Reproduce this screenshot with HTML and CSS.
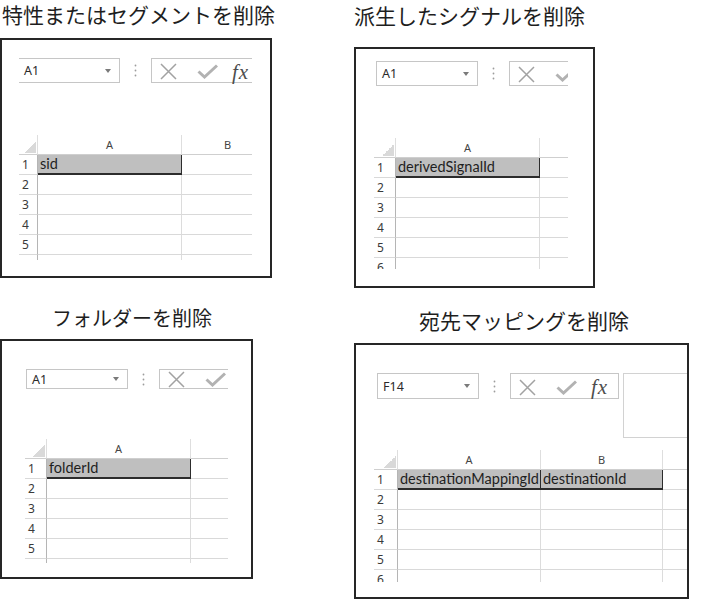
FILE: index.html
```html
<!DOCTYPE html>
<html lang="ja">
<head>
<meta charset="utf-8">
<title>削除テンプレート</title>
<link rel="stylesheet" href="styles.css">
</head>
<body>
<div class="canvas">

  <figure class="fig fig-1">
    <div class="title">特性またはセグメントを削除</div>
    <div class="panel">
      <div class="shot">
        <div class="toolbar">
          <div class="namebox"><span class="nb-text">A1</span><span class="caret"></span></div>
          <div class="dots"><svg width="3" height="13" viewBox="0 0 3 13"><circle cx="1.5" cy="1.5" r="0.9"/><circle cx="1.5" cy="6.5" r="0.9"/><circle cx="1.5" cy="11.5" r="0.9"/></svg></div>
          <div class="fbar">
            <svg class="ic-x" width="17" height="17" viewBox="0 0 17 17"><path d="M1 1 L16 16 M16 1 L1 16"/></svg>
            <svg class="ic-check" width="21" height="15" viewBox="0 0 21 15"><path d="M1.5 7.5 L7.5 13 L20 1.5"/></svg>
            <span class="fx">fx</span>
          </div>
        </div>
        <div class="grid">
          <div class="grow hrow"><div class="corner"><span class="tri"></span></div><div class="ch">A</div><div class="ch">B</div><div class="ch"></div></div>
          <div class="grow"><div class="rh">1</div><div class="c sel">sid</div><div class="c"></div><div class="c"></div></div>
          <div class="grow"><div class="rh">2</div><div class="c"></div><div class="c"></div><div class="c"></div></div>
          <div class="grow"><div class="rh">3</div><div class="c"></div><div class="c"></div><div class="c"></div></div>
          <div class="grow"><div class="rh">4</div><div class="c"></div><div class="c"></div><div class="c"></div></div>
          <div class="grow"><div class="rh">5</div><div class="c"></div><div class="c"></div><div class="c"></div></div>
          <div class="grow"><div class="rh"></div><div class="c"></div><div class="c"></div><div class="c"></div></div>
        </div>
      </div>
    </div>
  </figure>

  <figure class="fig fig-2">
    <div class="title">派生したシグナルを削除</div>
    <div class="panel">
      <div class="shot">
        <div class="toolbar">
          <div class="namebox"><span class="nb-text">A1</span><span class="caret"></span></div>
          <div class="dots"><svg width="3" height="13" viewBox="0 0 3 13"><circle cx="1.5" cy="1.5" r="0.9"/><circle cx="1.5" cy="6.5" r="0.9"/><circle cx="1.5" cy="11.5" r="0.9"/></svg></div>
          <div class="fbar">
            <svg class="ic-x" width="17" height="17" viewBox="0 0 17 17"><path d="M1 1 L16 16 M16 1 L1 16"/></svg>
            <svg class="ic-check" width="21" height="15" viewBox="0 0 21 15"><path d="M1.5 7.5 L7.5 13 L20 1.5"/></svg>
          </div>
        </div>
        <div class="grid">
          <div class="grow hrow"><div class="corner"><span class="tri"></span></div><div class="ch">A</div><div class="ch"></div><div class="ch"></div></div>
          <div class="grow"><div class="rh">1</div><div class="c sel">derivedSignalId</div><div class="c"></div><div class="c"></div></div>
          <div class="grow"><div class="rh">2</div><div class="c"></div><div class="c"></div><div class="c"></div></div>
          <div class="grow"><div class="rh">3</div><div class="c"></div><div class="c"></div><div class="c"></div></div>
          <div class="grow"><div class="rh">4</div><div class="c"></div><div class="c"></div><div class="c"></div></div>
          <div class="grow"><div class="rh">5</div><div class="c"></div><div class="c"></div><div class="c"></div></div>
          <div class="grow"><div class="rh">6</div><div class="c"></div><div class="c"></div><div class="c"></div></div>
        </div>
      </div>
    </div>
  </figure>

  <figure class="fig fig-3">
    <div class="title">フォルダーを削除</div>
    <div class="panel">
      <div class="shot">
        <div class="toolbar">
          <div class="namebox"><span class="nb-text">A1</span><span class="caret"></span></div>
          <div class="dots"><svg width="3" height="13" viewBox="0 0 3 13"><circle cx="1.5" cy="1.5" r="0.9"/><circle cx="1.5" cy="6.5" r="0.9"/><circle cx="1.5" cy="11.5" r="0.9"/></svg></div>
          <div class="fbar">
            <svg class="ic-x" width="17" height="17" viewBox="0 0 17 17"><path d="M1 1 L16 16 M16 1 L1 16"/></svg>
            <svg class="ic-check" width="21" height="15" viewBox="0 0 21 15"><path d="M1.5 7.5 L7.5 13 L20 1.5"/></svg>
          </div>
        </div>
        <div class="grid">
          <div class="grow hrow"><div class="corner"><span class="tri"></span></div><div class="ch">A</div><div class="ch"></div><div class="ch"></div></div>
          <div class="grow"><div class="rh">1</div><div class="c sel">folderId</div><div class="c"></div><div class="c"></div></div>
          <div class="grow"><div class="rh">2</div><div class="c"></div><div class="c"></div><div class="c"></div></div>
          <div class="grow"><div class="rh">3</div><div class="c"></div><div class="c"></div><div class="c"></div></div>
          <div class="grow"><div class="rh">4</div><div class="c"></div><div class="c"></div><div class="c"></div></div>
          <div class="grow"><div class="rh">5</div><div class="c"></div><div class="c"></div><div class="c"></div></div>
          <div class="grow"><div class="rh"></div><div class="c"></div><div class="c"></div><div class="c"></div></div>
        </div>
      </div>
    </div>
  </figure>

  <figure class="fig fig-4">
    <div class="title">宛先マッピングを削除</div>
    <div class="panel">
      <div class="shot">
        <div class="toolbar">
          <div class="namebox"><span class="nb-text">F14</span><span class="caret"></span></div>
          <div class="dots"><svg width="3" height="13" viewBox="0 0 3 13"><circle cx="1.5" cy="1.5" r="0.9"/><circle cx="1.5" cy="6.5" r="0.9"/><circle cx="1.5" cy="11.5" r="0.9"/></svg></div>
          <div class="fbar">
            <svg class="ic-x" width="17" height="17" viewBox="0 0 17 17"><path d="M1 1 L16 16 M16 1 L1 16"/></svg>
            <svg class="ic-check" width="21" height="15" viewBox="0 0 21 15"><path d="M1.5 7.5 L7.5 13 L20 1.5"/></svg>
            <span class="fx">fx</span>
          </div>
          <div class="fexpand"></div>
        </div>
        <div class="grid">
          <div class="grow hrow"><div class="corner"><span class="tri"></span></div><div class="ch">A</div><div class="ch">B</div><div class="ch"></div></div>
          <div class="grow"><div class="rh">1</div><div class="c sel">destinationMappingId</div><div class="c sel">destinationId</div><div class="c"></div></div>
          <div class="grow"><div class="rh">2</div><div class="c"></div><div class="c"></div><div class="c"></div></div>
          <div class="grow"><div class="rh">3</div><div class="c"></div><div class="c"></div><div class="c"></div></div>
          <div class="grow"><div class="rh">4</div><div class="c"></div><div class="c"></div><div class="c"></div></div>
          <div class="grow"><div class="rh">5</div><div class="c"></div><div class="c"></div><div class="c"></div></div>
          <div class="grow"><div class="rh">6</div><div class="c"></div><div class="c"></div><div class="c"></div></div>
        </div>
      </div>
    </div>
  </figure>

</div>
</body>
</html>
```

FILE: styles.css
```css
* { box-sizing: border-box; }

html, body {
  margin: 0;
  padding: 0;
  background: #ffffff;
}

body {
  width: 708px;
  height: 600px;
  overflow: hidden;
  font-family: "Noto Sans", "Liberation Sans", sans-serif;
  color: #222;
}

.canvas {
  display: grid;
  grid-template-columns: 354px 354px;
  grid-template-rows: 300px 300px;
}

.fig {
  margin: 0;
  display: flex;
  flex-direction: column;
  align-items: flex-start;
}

.title {
  font-family: "Noto Sans CJK JP", "Noto Sans", sans-serif;
  font-size: 21px;
  line-height: 28px;
  color: #1e1e1e;
  white-space: nowrap;
}

.panel {
  border: 2px solid #262626;
  background: #fff;
}

.shot {
  overflow: hidden;
}

/* ---------- per-figure geometry ---------- */
.fig-1 .title { padding-left: 2px; }
.fig-1 .panel { margin-top: 10px; width: 272px; height: 240px; }
.fig-1 .shot { margin-left: 17px; width: 233px; padding-top: 18px; }
.fig-1 .namebox { margin-left: -1px; width: 102px; }
.fig-1 .grid { margin-top: 52px; height: 125px; }
.fig-1 .grow { grid-template-columns: 19px 144px 92px 20px; }

.fig-2 .title { padding-top: 1px; }
.fig-2 .panel { margin-top: 18px; width: 241px; height: 241px; }
.fig-2 .shot { margin-left: 18px; width: 194px; padding-top: 12px; }
.fig-2 .namebox { margin-left: 2px; }
.fig-2 .grid { margin-top: 52px; height: 131px; }
.fig-2 .grow { grid-template-columns: 22px 144px 92px 20px; }

.fig-3 .title { padding-top: 4px; padding-left: 52px; font-size: 20px; }
.fig-3 .panel { margin-top: 7px; width: 253px; height: 240px; }
.fig-3 .shot { margin-left: 23px; width: 203px; padding-top: 28px; }
.fig-3 .namebox { margin-left: 1px; }
.fig-3 .toolbar { --tb-h: 20px; }
.fig-3 .fbar { padding-top: 0; }
.fig-3 .grid { margin-top: 50px; height: 124px; }
.fig-3 .grow { grid-template-columns: 22px 144px 92px 20px; }

.fig-4 .title { padding-top: 6px; padding-left: 65px; }
.fig-4 .panel { margin-top: 9px; width: 335px; height: 256px; }
.fig-4 .shot { margin-left: 18px; width: 313px; padding-top: 28px; }
.fig-4 .namebox { margin-left: 3px; }
.fig-4 .toolbar { --tb-h: 26px; }
.fig-4 .fbar { width: 109px; border-right: 1px solid #c6c6c6; }
.fig-4 .grid { margin-top: 12px; height: 132px; }
.fig-4 .grow { grid-template-columns: 24px 143px 122px 40px; }

/* ---------- toolbar ---------- */
.toolbar {
  --tb-h: 25px;
  display: flex;
  align-items: flex-start;
}

.namebox {
  flex: none;
  width: 102px;
  height: var(--tb-h);
  border: 1px solid #c6c6c6;
  display: flex;
  align-items: center;
  padding-left: 5px;
}

.nb-text {
  font-size: 12.5px;
  color: #2a2a2a;
}

.caret {
  margin-left: auto;
  margin-right: 8px;
  width: 0;
  height: 0;
  border-left: 3.5px solid transparent;
  border-right: 3.5px solid transparent;
  border-top: 4px solid #7a7a7a;
}

.dots {
  flex: none;
  width: 31px;
  height: var(--tb-h);
  display: flex;
  align-items: center;
  justify-content: center;
}

.dots svg { fill: #9c9c9c; display: block; }

.fbar {
  flex: none;
  width: 130px;
  height: var(--tb-h);
  border: 1px solid #c6c6c6;
  border-right: none;
  display: flex;
  align-items: center;
  padding-left: 8px;
  padding-top: 2px;
}

.ic-x {
  flex: none;
  display: block;
  fill: none;
  stroke: #a2a2a2;
  stroke-width: 1.5;
}

.ic-check {
  flex: none;
  display: block;
  margin-left: 20px;
  fill: none;
  stroke: #b2b2b2;
  stroke-width: 3;
  stroke-linejoin: miter;
}

.fx {
  margin-left: 14px;
  font-family: "Liberation Serif", "DejaVu Serif", serif;
  font-style: italic;
  font-size: 21px;
  line-height: 20px;
  letter-spacing: 1px;
  color: #4e4e4e;
}

.fexpand {
  flex: none;
  width: 64px;
  height: 65px;
  margin-left: 4px;
  border: 1px solid #d2d2d2;
  border-right: none;
}

/* ---------- grid ---------- */
.grid {
  overflow: hidden;
}

.grow {
  display: grid;
  height: 20px;
  width: max-content;
}

.hrow .corner,
.hrow .ch {
  border-right: 1px solid #dedede;
  border-bottom: 1px solid #cfcfcf;
}

.corner {
  display: flex;
  justify-content: flex-end;
  align-items: flex-end;
  padding: 0 1px 1px 0;
}

.tri {
  width: 12px;
  height: 12px;
  background: linear-gradient(to bottom right, transparent 50%, #d9d9d9 50%);
}

.ch {
  font-size: 11px;
  line-height: 19px;
  text-align: center;
  color: #444;
}

.rh {
  border-right: 1px solid #b5b5b5;
  border-bottom: 1px solid #d9d9d9;
  font-size: 12px;
  line-height: 19px;
  padding-left: 3px;
  color: #3a3a3a;
}

.c {
  border-right: 1px solid #dcdcdc;
  border-bottom: 1px solid #d9d9d9;
  font-family: "Lato", "Liberation Sans", sans-serif;
  font-size: 14.5px;
  line-height: 18px;
  padding-left: 2px;
  color: #1e1e1e;
  white-space: nowrap;
  overflow: hidden;
}

.c.sel {
  background: #bfbfbf;
  border-right: 1px solid #2c2c2c;
  border-bottom: 2px solid #2c2c2c;
}
```
